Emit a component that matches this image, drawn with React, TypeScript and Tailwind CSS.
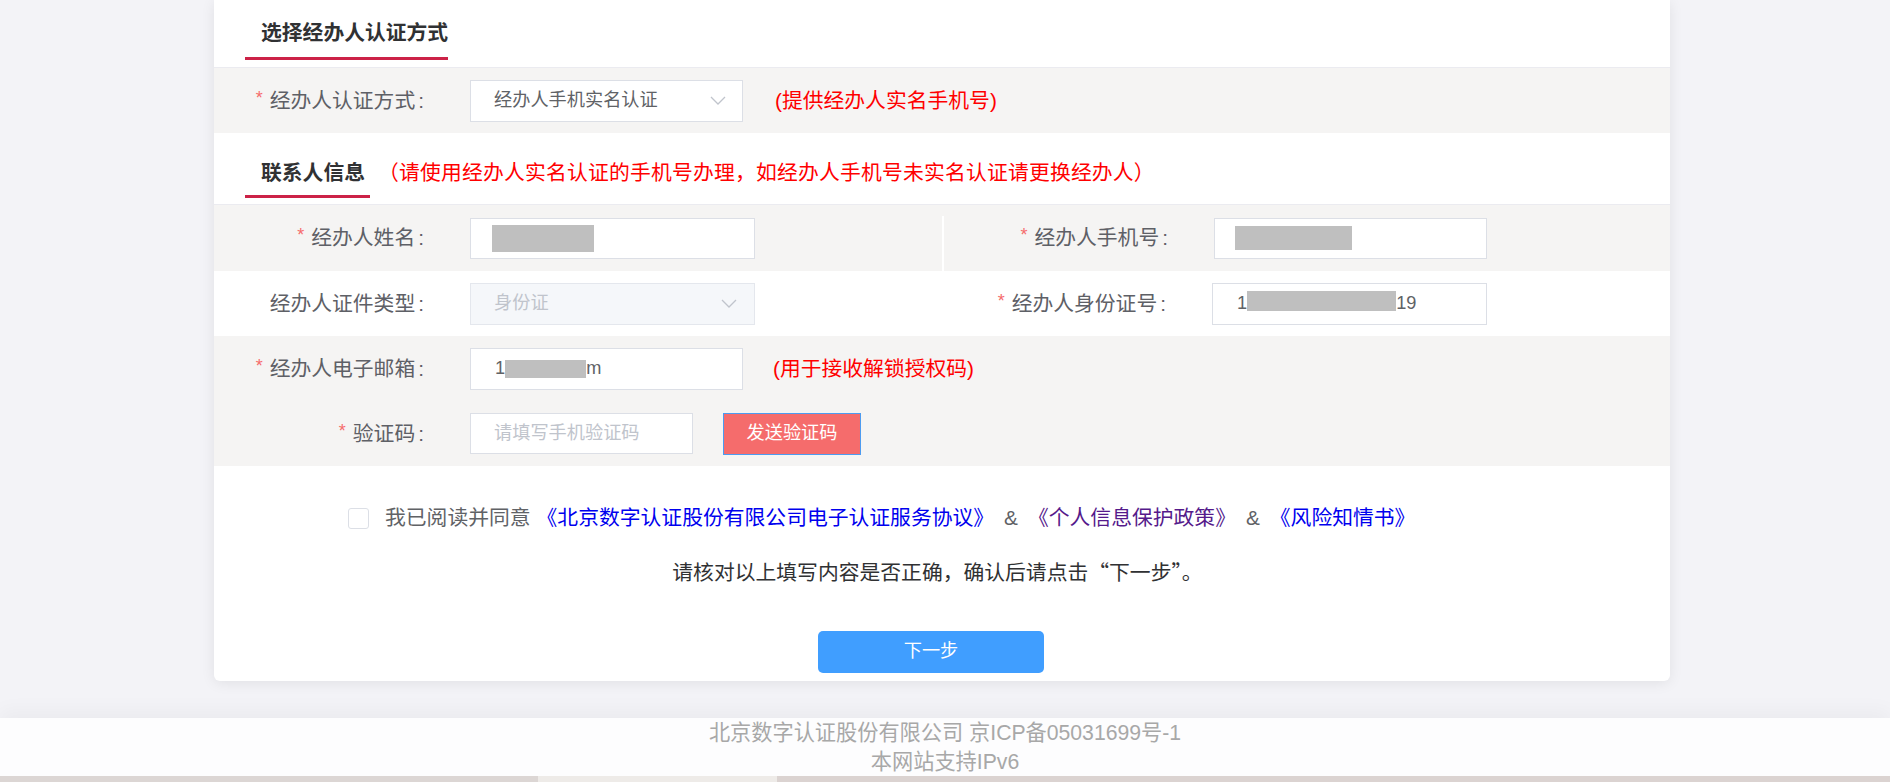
import React from "react";

const ff = "font-['Liberation_Sans','Noto_Sans_CJK_SC',sans-serif]";
const cjk = "font-['Noto_Sans_CJK_SC',sans-serif]";

function Star() {
  return <span className="mr-[7px] align-top text-[18px] text-[#f56c6c]">*</span>;
}

function Colon() {
  return <span className="ml-[3px]">:</span>;
}

function Chevron() {
  return (
    <svg width="16" height="9" viewBox="0 0 16 9" fill="none">
      <polyline points="1,1 8,8 15,1" stroke="#c0c4cc" strokeWidth="1.3" />
    </svg>
  );
}

function Redact({ className }: { className: string }) {
  return <span className={"block bg-[#bfbfbf] " + className} />;
}

export default function App() {
  return (
    <div className={"flex h-[782px] w-[1890px] flex-col overflow-hidden bg-[#f3f3f7] " + ff}>
      {/* card */}
      <div className="ml-[214px] w-[1456px] rounded-b-[6px] bg-white shadow-[0_2px_14px_rgba(0,0,0,0.08)]">
        {/* section 1 */}
        <div className="flex h-[67px] pl-[31px] pt-[19px]">
          <div className="h-[41px] border-b-[3px] border-[#cc2247] pb-[10px] pl-4 text-[20.8px] font-bold leading-[28px] text-[#303133]">
            选择经办人认证方式
          </div>
        </div>
        <div className="flex h-[66px] items-center border-t border-[#ebebf0] bg-[#f5f4f3]">
          <div className="w-[210px] text-right text-[20.8px] text-[#5e6066]">
            <Star />经办人认证方式<Colon />
          </div>
          <div className="ml-[46px] flex h-[42px] w-[273px] items-center justify-between border border-[#dcdfe6] bg-white pl-[23px] pr-[16px] text-[18.2px] text-[#606266]">
            <span>经办人手机实名认证</span>
            <Chevron />
          </div>
          <div className="ml-[32px] text-[20.8px] text-[#ff0000]">(提供经办人实名手机号)</div>
        </div>

        {/* section 2 */}
        <div className="flex h-[71px] items-start pl-[31px] pt-[26px]">
          <div className="h-[39px] border-b-[3px] border-[#cc2247] pb-[8px] pl-4 pr-[5px] text-[20.8px] font-bold leading-[28px] text-[#303133]">
            联系人信息
          </div>
          <div className="ml-[8px] text-[20.8px] leading-[28px] tracking-[0.2px] text-[#ff0000]">
            （请使用经办人实名认证的手机号办理，如经办人手机号未实名认证请更换经办人）
          </div>
        </div>

        {/* row: name / phone */}
        <div className="flex h-[67px] border-t border-[#ebebf0] bg-[#f5f4f3]">
          <div className="flex w-[728px] items-center">
            <div className="w-[210px] text-right text-[20.8px] text-[#5e6066]">
              <Star />经办人姓名<Colon />
            </div>
            <div className="ml-[46px] flex h-[41px] w-[285px] items-center border border-[#dcdfe6] bg-white pl-[21px]">
              <Redact className="h-[27px] w-[102px]" />
            </div>
          </div>
          <div className="mt-[11px] w-[2px] bg-white" />
          <div className="flex flex-1 items-center">
            <div className="w-[224px] text-right text-[20.8px] text-[#5e6066]">
              <Star />经办人手机号<Colon />
            </div>
            <div className="ml-[46px] flex h-[41px] w-[273px] items-center border border-[#dcdfe6] bg-white pl-[20px]">
              <Redact className="h-[24px] w-[117px]" />
            </div>
          </div>
        </div>

        {/* row: id type / id number */}
        <div className="flex h-[65px] bg-white">
          <div className="flex w-[728px] items-center">
            <div className="w-[210px] text-right text-[20.8px] text-[#5e6066]">
              经办人证件类型<Colon />
            </div>
            <div className="ml-[46px] flex h-[42px] w-[285px] items-center justify-between border border-[#e4e7ed] bg-[#f5f7fa] pl-[23px] pr-[17px] text-[18.2px] text-[#c0c4cc]">
              <span>身份证</span>
              <Chevron />
            </div>
          </div>
          <div className="w-[2px]" />
          <div className="flex flex-1 items-center">
            <div className="w-[222px] text-right text-[20.8px] text-[#5e6066]">
              <Star />经办人身份证号<Colon />
            </div>
            <div className="ml-[46px] flex h-[42px] w-[275px] items-center border border-[#dcdfe6] bg-white pl-[24px] text-[18.2px] text-[#606266]">
              <span>1</span>
              <Redact className="-mt-[6px] h-[20px] w-[149px]" />
              <span>19</span>
            </div>
          </div>
        </div>

        {/* row: email / code */}
        <div className="bg-[#f5f4f3]">
          <div className="flex h-[65px] items-center">
            <div className="w-[210px] text-right text-[20.8px] text-[#5e6066]">
              <Star />经办人电子邮箱<Colon />
            </div>
            <div className="ml-[46px] flex h-[42px] w-[273px] items-center border border-[#dcdfe6] bg-white pl-[24px] text-[18.2px] text-[#606266]">
              <span>1</span>
              <Redact className="h-[18px] w-[81px]" />
              <span>m</span>
            </div>
            <div className="ml-[30px] text-[20.8px] text-[#ff0000]">(用于接收解锁授权码)</div>
          </div>
          <div className="flex h-[65px] items-center">
            <div className="w-[210px] text-right text-[20.8px] text-[#5e6066]">
              <Star />验证码<Colon />
            </div>
            <div className="ml-[46px] flex h-[41px] w-[223px] items-center border border-[#dcdfe6] bg-white pl-[23px] text-[18.2px] text-[#c0c4cc]">
              请填写手机验证码
            </div>
            <button className="ml-[30px] h-[42px] w-[138px] border border-[#4c9bf0] bg-[#f56c6c] text-[18.2px] text-white">
              发送验证码
            </button>
          </div>
        </div>

        {/* agreement */}
        <div className="pb-[8px] pt-[37px]">
          <div className="flex h-[30px] items-center pl-[134px] text-[20.8px] text-[#606266]">
            <span className="h-[21px] w-[21px] rounded-[3px] border border-[#dcdfe6] bg-white" />
            <span className="ml-4">我已阅读并同意</span>
            <span className="ml-[6px] text-[#0000ee]">《北京数字认证股份有限公司电子认证服务协议》</span>
            <span className="mx-[10px]">&amp;</span>
            <span className="text-[#551a8b]">《个人信息保护政策》</span>
            <span className="mx-[10px]">&amp;</span>
            <span className="text-[#0000ee]">《风险知情书》</span>
          </div>
          <div className={"mt-[24px] flex h-[30px] items-center justify-center pr-[9px] text-[20.8px] text-[#303133] " + cjk}>
            请核对以上填写内容是否正确，确认后请点击“下一步”。
          </div>
          <div className="mt-[44px] flex justify-center pr-[22px]">
            <button className="h-[42px] w-[226px] rounded-[5px] bg-[#409eff] text-[18.2px] text-white">下一步</button>
          </div>
        </div>
      </div>

      {/* footer */}
      <div className="mt-[37px] h-[58px] bg-[#fdfdfe] text-center text-[21.2px] leading-[29px] text-[#a8a8a8] shadow-[0_-8px_18px_rgba(0,0,0,0.035)]">
        <div>北京数字认证股份有限公司 京ICP备05031699号-1</div>
        <div>本网站支持IPv6</div>
      </div>
      <div className="flex h-[6px]">
        <div className="w-[538px] bg-[#dcd6d4]" />
        <div className="w-[239px] bg-[#eeebe8]" />
        <div className="flex-1 bg-[#dbd3d1]" />
      </div>
    </div>
  );
}
